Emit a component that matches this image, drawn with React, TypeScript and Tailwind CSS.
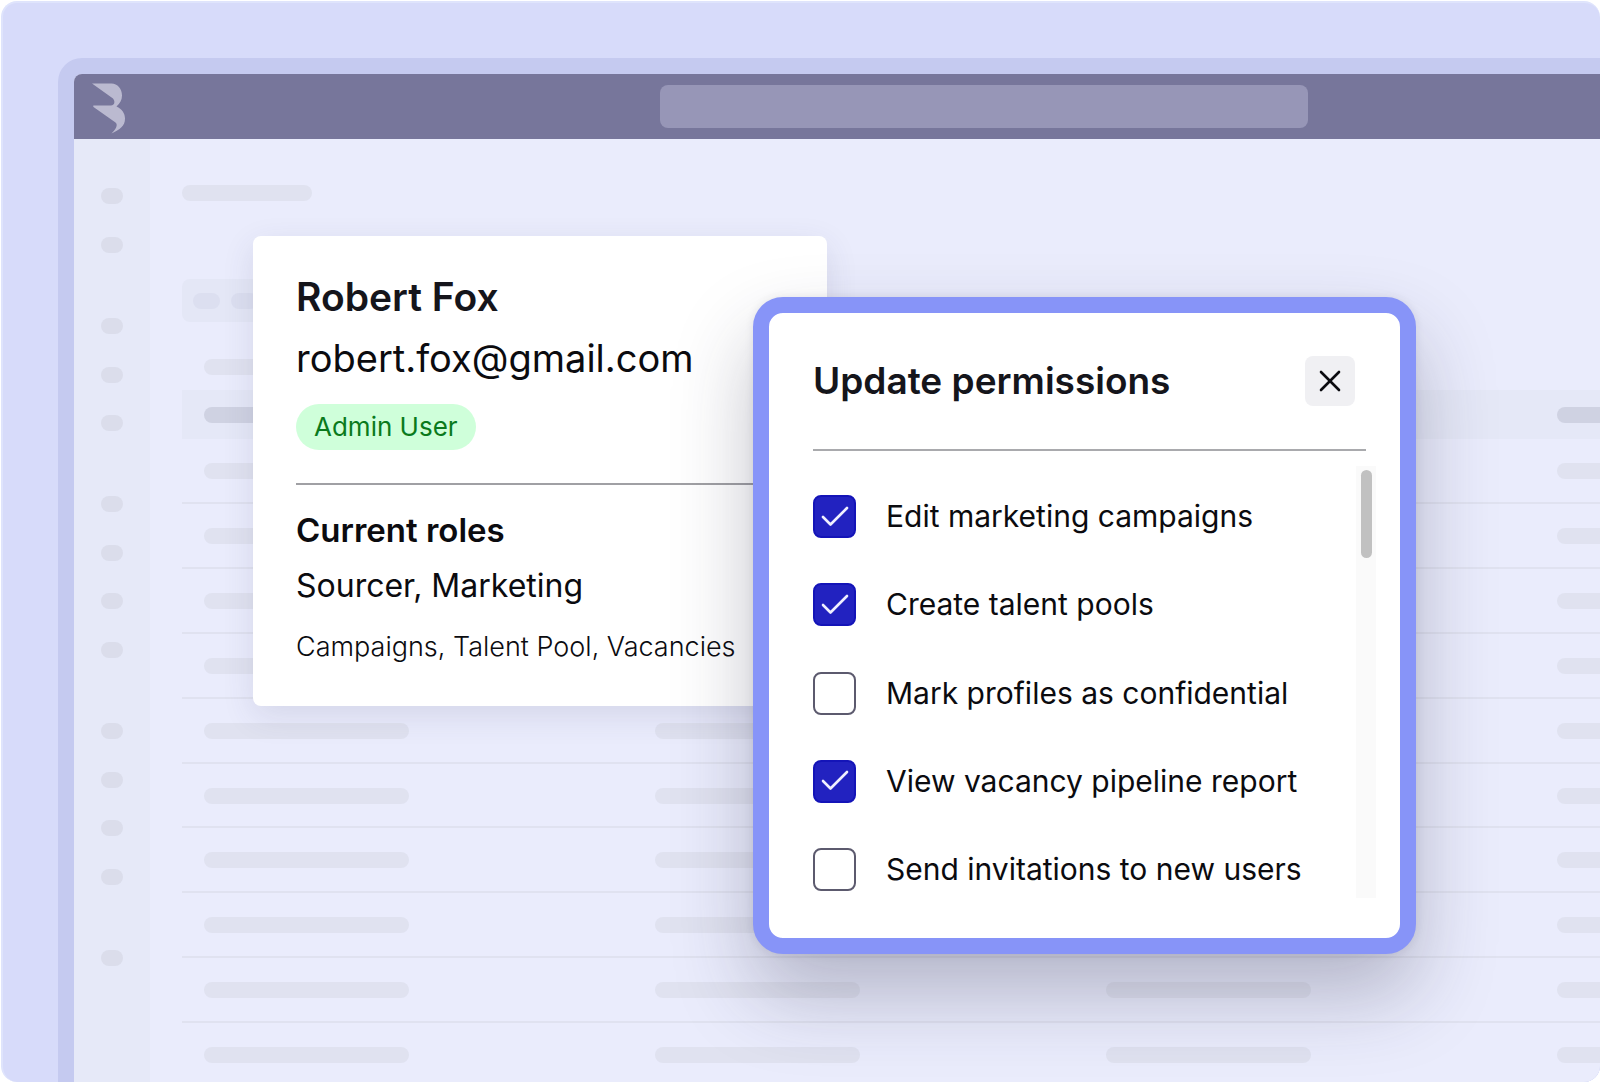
import { Check, X } from "lucide-react";

interface Permission {
  id: string;
  label: string;
  granted: boolean;
}

const permissions: Permission[] = [
  { id: "edit-campaigns", label: "Edit marketing campaigns", granted: true },
  { id: "create-pools", label: "Create talent pools", granted: true },
  { id: "mark-confidential", label: "Mark profiles as confidential", granted: false },
  { id: "view-pipeline", label: "View vacancy pipeline report", granted: true },
  { id: "send-invitations", label: "Send invitations to new users", granted: false },
];

const navGroups = [
  { count: 2, height: "h-[65px]" },
  { count: 3, height: "h-[113px]" },
  { count: 4, height: "h-[162px]" },
  { count: 4, height: "h-[162px]" },
  { count: 1, height: "h-4" },
];

const range = (count: number) => Array.from({ length: count }, (_, i) => i);

const Logo = () => (
  <svg viewBox="0 0 34 54" className="h-[54px] w-[34px] fill-[#bbbad0]" aria-hidden="true">
    <path d="M0 3.500H19.500C25.500 3.500 30 8.500 30 15.500C30 20 28 23 24.500 26.500C30 29 33 33.500 33 38.500C33 46 28 49.500 19.500 53.500C23.500 49.500 26.500 45 23.500 42.500L1.500 27C1 26 1 25.500 2 25.500H19C22.500 25.500 23.500 21.500 21 18.500Z" />
  </svg>
);

const TopBar = () => (
  <header className="flex h-[65px] items-center bg-[#77769b] pl-[18px]">
    <Logo />
    <div className="ml-[534px] h-[43px] w-[648px] rounded-lg bg-[#9796b7]" />
  </header>
);

const Sidebar = () => (
  <nav className="flex w-[76px] shrink-0 flex-col items-center gap-[65px] bg-[#e6e9f8] pt-[49px]">
    {navGroups.map((group, index) => (
      <div key={index} className={`flex flex-col justify-between ${group.height}`}>
        {range(group.count).map(i => (
          <div key={i} className="h-4 w-[22px] rounded-full bg-[#dbddeb]" />
        ))}
      </div>
    ))}
  </nav>
);

const TableSkeleton = () => (
  <div>
    <div className="flex h-[49px] items-center bg-[#e5e8f7] pl-[22px]">
      {range(4).map(i => (
        <div key={i} className="w-[451px] shrink-0">
          <div className="h-4 w-[205px] rounded-full bg-[#cfd2e2]" />
        </div>
      ))}
    </div>
    <div className="flex h-[649px] flex-col">
      {range(10).map(row => (
        <div key={row} className="flex flex-1 items-start border-b-2 border-[#e0e2f0] pt-6 pl-[22px]">
          {range(4).map(i => (
            <div key={i} className="w-[451px] shrink-0">
              <div className="h-4 w-[205px] rounded-full bg-[#e0e2f0]" />
            </div>
          ))}
        </div>
      ))}
    </div>
  </div>
);

const Workspace = () => (
  <main className="min-w-0 flex-1 overflow-hidden pt-[46px] pl-8">
    <div className="h-4 w-[130px] rounded-full bg-[#e0e2f0]" />
    <div className="mt-[78px] flex h-[43px] w-[205px] items-center gap-[11px] rounded-lg bg-[#e4e7f6] pl-[11px]">
      {range(4).map(i => (
        <div key={i} className="h-4 w-[27px] rounded-full bg-[#dcdff0]" />
      ))}
    </div>
    <div className="mt-[37px] mb-[15px] ml-[22px] h-4 w-[130px] rounded-full bg-[#e0e2f0]" />
    <TableSkeleton />
  </main>
);

const UserCard = () => (
  <section className="absolute top-[236px] left-[253px] w-[574px] rounded-lg bg-white px-[43px] pt-9 pb-10 shadow-[0_10px_32px_rgba(60,60,100,0.12)]">
    <h2 className="text-[39px] leading-[50px] font-semibold text-[#15151b]">Robert Fox</h2>
    <p className="mt-3 text-[38px] leading-[48px]">robert.fox@gmail.com</p>
    <span className="mt-[22px] inline-block rounded-full bg-[#cfffda] px-[18px] text-[26px] leading-[46px] text-[#0a7a1c]">
      Admin User
    </span>
    <hr className="mt-[33px] border-t-2 border-[#a0a0a4]" />
    <h3 className="mt-[25px] text-[33px] leading-10 font-semibold">Current roles</h3>
    <p className="mt-4 text-[32px] leading-10">Sourcer, Marketing</p>
    <p className="mt-[21px] text-[27px] leading-[39px] font-light whitespace-nowrap">Campaigns, Talent Pool, Vacancies</p>
  </section>
);

const PermissionRow = ({ permission }: { permission: Permission }) => (
  <li className="flex items-center">
    <span className="grid size-[43px] shrink-0">
      <input
        id={permission.id}
        type="checkbox"
        defaultChecked={permission.granted}
        className="peer col-start-1 row-start-1 size-full appearance-none rounded-lg border-2 border-[#5c5a6e] bg-white checked:border-[#1414b8] checked:bg-[#2222c0]"
      />
      <Check
        className="pointer-events-none col-start-1 row-start-1 hidden size-9 place-self-center text-[#f0f0ff] peer-checked:block"
        strokeWidth={1.75}
        aria-hidden="true"
      />
    </span>
    <label htmlFor={permission.id} className="pl-[30px] text-[30px] leading-[43px] whitespace-nowrap">
      {permission.label}
    </label>
  </li>
);

const PermissionsDialog = () => (
  <div
    role="dialog"
    aria-labelledby="permissions-title"
    className="absolute top-[297px] left-[753px] w-[663px] rounded-[30px] border-[16px] border-[#8794f8] bg-white pb-10 pl-11 shadow-[0_0_8px_rgba(40,40,70,0.1),0_40px_80px_rgba(40,40,70,0.28)]"
  >
    <div className="mr-[34px] flex items-center justify-between border-b-2 border-[#a9aaad] pt-[43px] pr-[11px] pb-[43px]">
      <h2 id="permissions-title" className="text-[37px] leading-[50px] font-semibold text-[#15151b]">
        Update permissions
      </h2>
      <button type="button" aria-label="Close" className="grid size-[50px] place-items-center rounded-lg bg-[#f0f0f3]">
        <X className="size-9" strokeWidth={1.75} />
      </button>
    </div>
    <div className="mt-[15px] mr-6 flex justify-between">
      <ul className="flex h-[432px] flex-col justify-between pt-[29px] pb-[7px]">
        {permissions.map(permission => (
          <PermissionRow key={permission.id} permission={permission} />
        ))}
      </ul>
      <div className="w-5 bg-[#fafafa] px-[5px] pt-1">
        <div className="h-[88px] w-[11px] rounded-full bg-[#c1c1c1]" />
      </div>
    </div>
  </div>
);

export default function App() {
  return (
    <div className="h-screen bg-white pt-px pl-px font-['Inter',sans-serif] text-[#0b0b0f]">
      <div className="relative h-full overflow-hidden rounded-2xl border-t-2 border-l-2 border-[#dfe4fc] bg-[#d7dbfa]">
        <div className="mt-[55px] ml-[55px] h-full rounded-tl-3xl bg-[#c5caf0] pt-4 pl-4">
          <div className="flex h-full flex-col overflow-hidden rounded-tl-lg bg-[#eaecfc]">
            <TopBar />
            <div className="flex min-h-0 flex-1">
              <Sidebar />
              <Workspace />
            </div>
          </div>
        </div>
      </div>
      <UserCard />
      <PermissionsDialog />
    </div>
  );
}
